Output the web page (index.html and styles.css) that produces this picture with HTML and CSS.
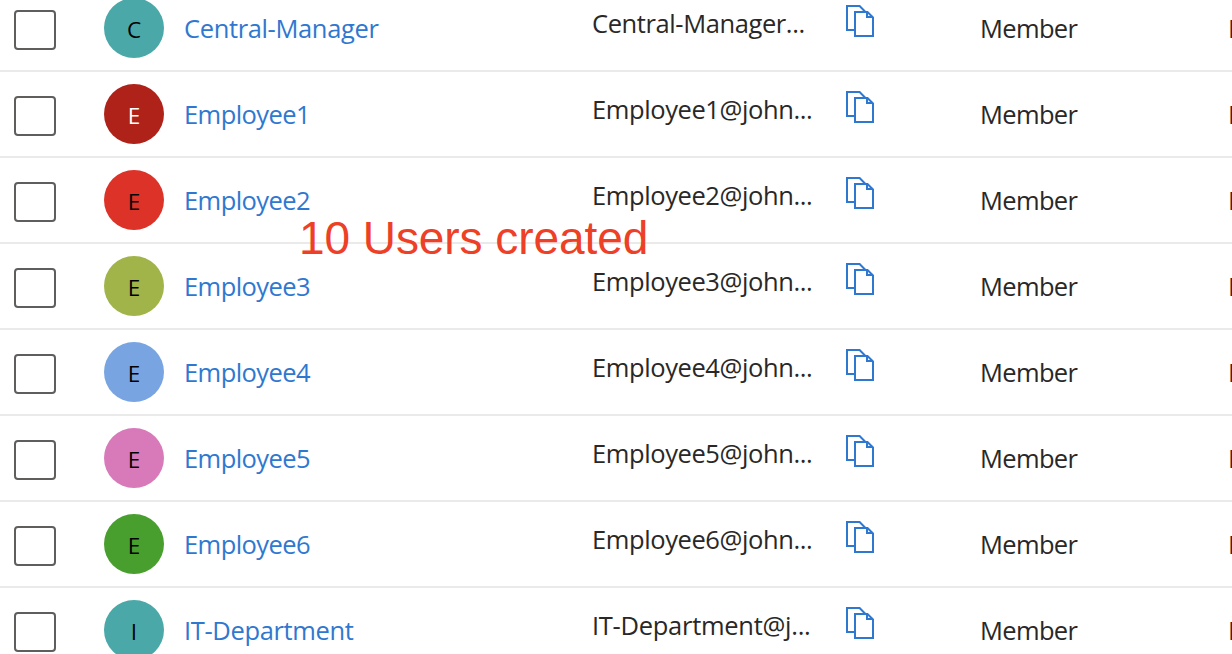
FILE: index.html
```html
<!DOCTYPE html>
<html lang="en">
<head>
<meta charset="utf-8">
<title>Users</title>
<link rel="stylesheet" href="styles.css">
</head>
<body>
<svg class="defs" aria-hidden="true"><symbol id="copy" viewBox="0 0 28 32"><path d="M8 25H1V1H13.600L19.500 7" fill="none" stroke="currentColor" stroke-width="2"/><path d="M9 7H21.500L27 12.500V31H9Z" fill="#fff" stroke="currentColor" stroke-width="2"/><path d="M21 7V12H27" fill="none" stroke="currentColor" stroke-width="2"/></symbol></svg>
<main class="list">
<div class="row"><span class="check"></span><span class="avatar teal">C</span><a class="name long">Central-Manager</a><span class="mail">Central-Manager...</span><svg class="copy"><use href="#copy"/></svg><span class="type">Member</span><span class="more">No</span></div>
<div class="row"><span class="check"></span><span class="avatar dark-red">E</span><a class="name">Employee1</a><span class="mail">Employee1@john...</span><svg class="copy"><use href="#copy"/></svg><span class="type">Member</span><span class="more">No</span></div>
<div class="row"><span class="check"></span><span class="avatar red">E</span><a class="name">Employee2</a><span class="mail">Employee2@john...</span><svg class="copy"><use href="#copy"/></svg><span class="type">Member</span><span class="more">No</span></div>
<div class="row"><span class="check"></span><span class="avatar olive">E</span><a class="name">Employee3</a><span class="mail">Employee3@john...</span><svg class="copy"><use href="#copy"/></svg><span class="type">Member</span><span class="more">No</span></div>
<div class="row"><span class="check"></span><span class="avatar blue">E</span><a class="name">Employee4</a><span class="mail">Employee4@john...</span><svg class="copy"><use href="#copy"/></svg><span class="type">Member</span><span class="more">No</span></div>
<div class="row"><span class="check"></span><span class="avatar pink">E</span><a class="name">Employee5</a><span class="mail">Employee5@john...</span><svg class="copy"><use href="#copy"/></svg><span class="type">Member</span><span class="more">No</span></div>
<div class="row"><span class="check"></span><span class="avatar green">E</span><a class="name">Employee6</a><span class="mail">Employee6@john...</span><svg class="copy"><use href="#copy"/></svg><span class="type">Member</span><span class="more">No</span></div>
<div class="row"><span class="check"></span><span class="avatar teal">I</span><a class="name long">IT-Department</a><span class="mail dept">IT-Department@j...</span><svg class="copy"><use href="#copy"/></svg><span class="type">Member</span><span class="more">No</span></div>
</main>
<div class="note">10 Users created</div>
</body>
</html>
```
FILE: styles.css
```css
* { box-sizing: border-box; }
html, body { margin: 0; height: 654px; overflow: hidden; background: #fff; }
body { position: relative; font: 25.5px/36px "Open Sans", sans-serif; color: #292827; }
.defs { position: absolute; width: 0; height: 0; }
.list { margin-top: -14px; }
.row {
  display: grid;
  grid-template-columns: 90px 80px 408px 254px 134px 248px 60px;
  height: 86px;
  padding-left: 14px;
  border-bottom: 2px solid #eaeaea;
  align-items: start;
  white-space: nowrap;
}
.check { width: 42px; height: 40px; margin-top: 24px; border: 2px solid #605e5c; border-radius: 4px; }
.avatar {
  width: 60px; height: 60px; margin-top: 12px;
  border-radius: 50%;
  text-align: center; font-size: 22.5px; line-height: 64px; color: #000;
}
.teal { background: #4aa8a8; }
.dark-red { background: #ae2219; color: #fff; }
.red { background: #dc3228; }
.olive { background: #a0b44a; }
.blue { background: #78a5e1; }
.pink { background: #d87aba; }
.green { background: #489f2e; }
.name { margin-top: 24px; color: #2f78d0; letter-spacing: -0.57px; }
.long { letter-spacing: -0.36px; }
.mail { margin-top: 19px; letter-spacing: -0.4px; }
.dept { letter-spacing: -0.28px; }
.copy { width: 28px; height: 32px; margin-top: 19px; color: #2f78d0; }
.type { margin-top: 24px; letter-spacing: -0.65px; }
.more { margin-top: 24px; }
.note {
  position: absolute; left: 299px; top: 212px;
  font: 46px/53px "Liberation Sans", Arial, sans-serif;
  letter-spacing: -0.07px;
  color: #ed4026; white-space: nowrap;
}
```
